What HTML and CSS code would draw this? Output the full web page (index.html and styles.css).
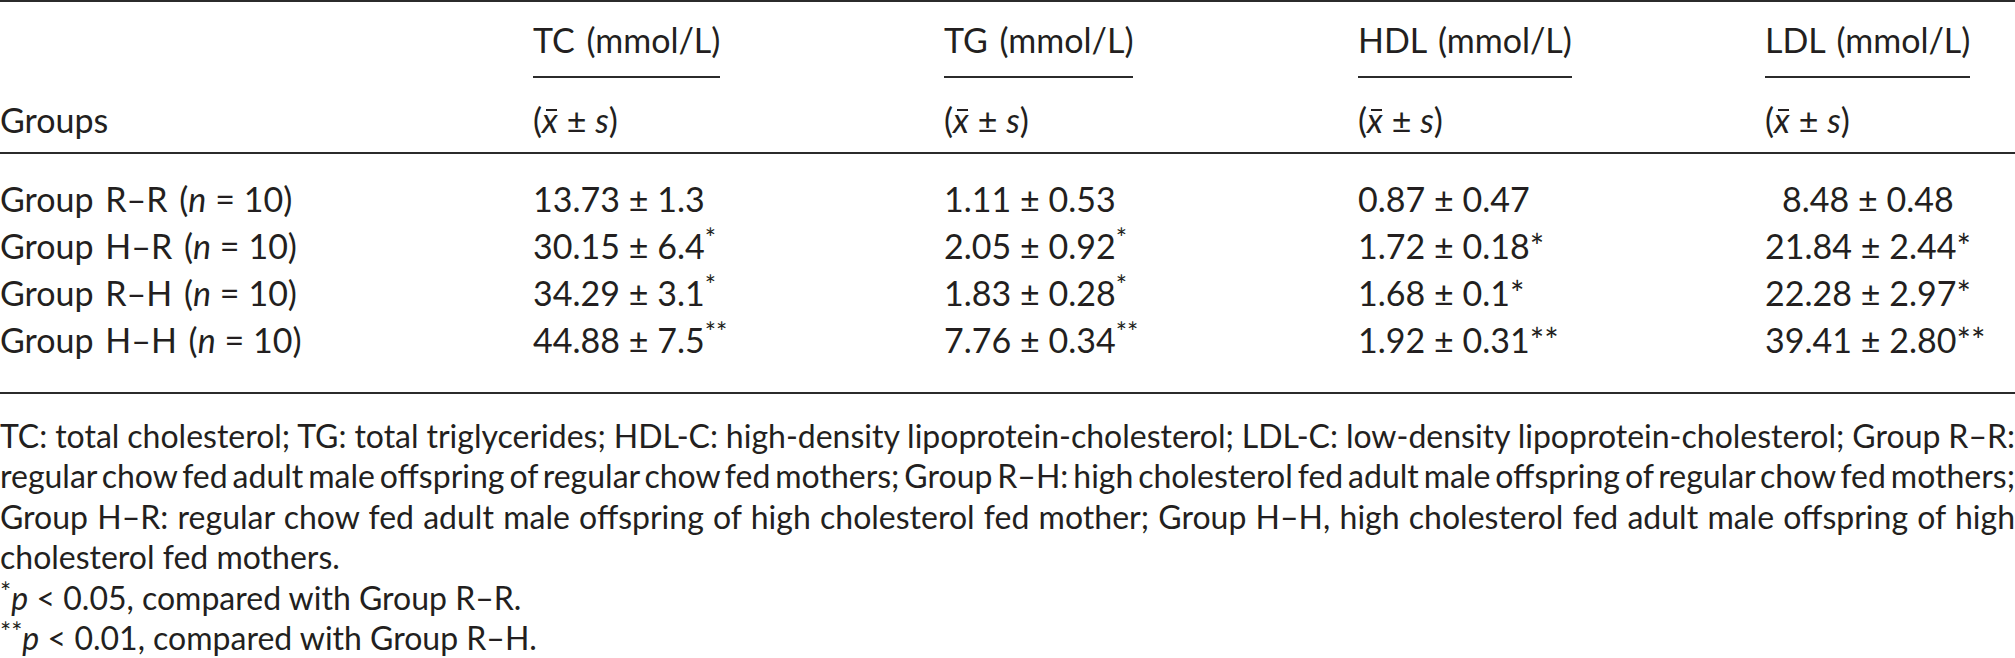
FILE: index.html
```html
<!DOCTYPE html>
<html lang="en">
<head>
<meta charset="utf-8">
<title>Serum lipids by group</title>
<link rel="stylesheet" href="styles.css">
</head>
<body>
<div class="page">
  <table class="data">
    <colgroup>
      <col class="c-group"><col class="c-tc"><col class="c-tg"><col class="c-hdl"><col class="c-ldl">
    </colgroup>
    <thead>
      <tr class="hrow1">
        <th></th>
        <th><span class="ul">TC (mmol/L)</span></th>
        <th><span class="ul">TG (mmol/L)</span></th>
        <th><span class="ul">HDL (mmol/L)</span></th>
        <th><span class="ul">LDL (mmol/L)</span></th>
      </tr>
      <tr class="hrow2">
        <th>Groups</th>
        <th>(<span class="xbar">x</span><span class="op">±</span><i>s</i>)</th>
        <th>(<span class="xbar">x</span><span class="op">±</span><i>s</i>)</th>
        <th>(<span class="xbar">x</span><span class="op">±</span><i>s</i>)</th>
        <th>(<span class="xbar">x</span><span class="op">±</span><i>s</i>)</th>
      </tr>
    </thead>
    <tbody>
      <tr>
        <td>Group R–R (<i>n</i><span class="op">=</span>10)</td>
        <td>13.73<span class="op">±</span>1.3</td>
        <td>1.11<span class="op">±</span>0.53</td>
        <td>0.87<span class="op">±</span>0.47</td>
        <td><span class="indent">8.48<span class="op">±</span>0.48</span></td>
      </tr>
      <tr>
        <td>Group H–R (<i>n</i><span class="op">=</span>10)</td>
        <td>30.15<span class="op">±</span>6.4<sup>*</sup></td>
        <td>2.05<span class="op">±</span>0.92<sup>*</sup></td>
        <td>1.72<span class="op">±</span>0.18*</td>
        <td>21.84<span class="op">±</span>2.44*</td>
      </tr>
      <tr>
        <td>Group R–H (<i>n</i><span class="op">=</span>10)</td>
        <td>34.29<span class="op">±</span>3.1<sup>*</sup></td>
        <td>1.83<span class="op">±</span>0.28<sup>*</sup></td>
        <td>1.68<span class="op">±</span>0.1*</td>
        <td>22.28<span class="op">±</span>2.97*</td>
      </tr>
      <tr>
        <td>Group H–H (<i>n</i><span class="op">=</span>10)</td>
        <td>44.88<span class="op">±</span>7.5<sup>**</sup></td>
        <td>7.76<span class="op">±</span>0.34<sup>**</sup></td>
        <td>1.92<span class="op">±</span>0.31**</td>
        <td>39.41<span class="op">±</span>2.80**</td>
      </tr>
    </tbody>
  </table>

  <div class="notes">
    <p class="line just">TC: total cholesterol; TG: total triglycerides; HDL-C: high-density lipoprotein-cholesterol; LDL-C: low-density lipoprotein-cholesterol; Group&nbsp;R–R:</p>
    <p class="line just">regular chow fed adult male offspring of regular chow fed mothers; Group R–H: high cholesterol fed adult male offspring of regular chow fed mothers;</p>
    <p class="line just">Group H–R: regular chow fed adult male offspring of high cholesterol fed mother; Group H–H, high cholesterol fed adult male offspring of high</p>
    <p class="line">cholesterol fed mothers.</p>
    <p class="line"><sup>*</sup><i>p</i><span class="op">&lt;</span>0.05, compared with Group R–R.</p>
    <p class="line"><sup>**</sup><i>p</i><span class="op">&lt;</span>0.01, compared with Group R–H.</p>
  </div>
</div>
</body>
</html>
```

FILE: styles.css
```css
html, body {
  margin: 0;
  padding: 0;
  background: #ffffff;
}

body {
  font-family: Lato, "Liberation Sans", sans-serif;
  color: #231f20;
}

.page {
  width: 2015px;
}

.data {
  width: 2015px;
  table-layout: fixed;
  border-collapse: collapse;
  font-size: 34px;
  border-top: 2px solid #2b2b2b;
  border-bottom: 2px solid #2b2b2b;
}

.c-group { width: 533px; }
.c-tc { width: 411px; }
.c-tg { width: 414px; }
.c-hdl { width: 407px; }
.c-ldl { width: 250px; }

.data th,
.data td {
  padding: 0;
  text-align: left;
  font-weight: normal;
  white-space: nowrap;
  vertical-align: top;
  word-spacing: 3px;
}

.hrow1 th {
  padding-top: 18px;
  line-height: 40px;
}

.ul {
  display: inline-block;
  padding-bottom: 16px;
  border-bottom: 2px solid #2b2b2b;
}

.hrow2 th {
  padding-top: 22px;
  padding-bottom: 12px;
  line-height: 40px;
  border-bottom: 2px solid #2b2b2b;
}

.data tbody td {
  line-height: 47px;
}

.data tbody tr:first-child td {
  padding-top: 21px;
}

.data tbody tr:last-child td {
  padding-bottom: 29px;
}

.indent {
  padding-left: 17px;
}

.op {
  margin: 0 0.26em;
}

.data sup {
  font-size: 0.78em;
  line-height: 0;
  vertical-align: 0.42em;
}

.xbar {
  position: relative;
  font-style: italic;
}

.xbar::after {
  content: "";
  position: absolute;
  left: 28%;
  right: 8%;
  top: 0.3em;
  border-top: 2px solid #231f20;
}

.notes {
  margin-top: 22px;
  font-size: 32px;
  line-height: 40.4px;
}

.line {
  margin: 0;
  white-space: nowrap;
}

.line.just {
  white-space: normal;
  text-align: justify;
  text-align-last: justify;
  word-spacing: -6px;
}

.notes sup {
  font-size: 0.82em;
  line-height: 0;
  vertical-align: 0.3em;
}
```
